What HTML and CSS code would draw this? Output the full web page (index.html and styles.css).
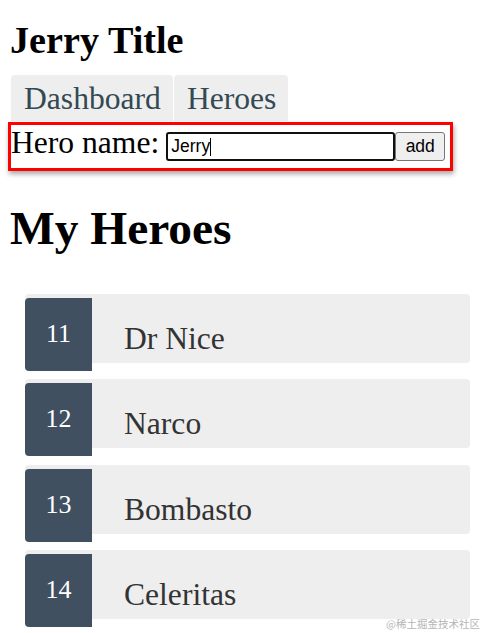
FILE: index.html
```html
<!DOCTYPE html>
<html lang="en">
<head>
<meta charset="utf-8">
<title>Jerry Title</title>
<link rel="stylesheet" href="styles.css">
</head>
<body>
<div class="page">
  <h1 class="title">Jerry Title</h1>
  <nav class="nav">
    <a class="nav-link" href="#">Dashboard</a>
    <a class="nav-link" href="#">Heroes</a>
  </nav>
  <div class="hero-form">
    <label class="hero-label" for="hero-name">Hero name:</label>
    <div class="field">
      <input class="hero-input" id="hero-name" type="text" value="Jerry">
      <span class="caret"></span>
    </div>
    <button class="add-btn" type="button">add</button>
  </div>
  <h2 class="section-title">My Heroes</h2>
  <ul class="heroes">
    <li class="hero"><span class="badge">11</span><span class="hero-name">Dr Nice</span></li>
    <li class="hero"><span class="badge">12</span><span class="hero-name">Narco</span></li>
    <li class="hero"><span class="badge">13</span><span class="hero-name">Bombasto</span></li>
    <li class="hero"><span class="badge">14</span><span class="hero-name">Celeritas</span></li>
  </ul>
</div>
<div class="watermark">@稀土掘金技术社区</div>
</body>
</html>
```
FILE: styles.css
```css
html, body {
  margin: 0;
  padding: 0;
  background: #fff;
}
body {
  font-family: "Liberation Serif", "Times New Roman", serif;
  color: #000;
  height: 633px;
  overflow: hidden;
  position: relative;
}
.page {
  padding: 19px 8px 0 8px;
}
.title {
  margin: 0;
  padding-left: 2px;
  font-size: 38.2px;
  line-height: 43px;
  font-weight: bold;
}
.nav {
  display: flex;
  gap: 1px;
  margin-top: 13px;
  padding-left: 3px;
}
.nav-link {
  display: block;
  background: #eee;
  color: #334953;
  text-decoration: none;
  font-size: 31.6px;
  line-height: 36px;
  padding: 6px 12px 4px 13px;
  border-radius: 4px 4px 0 0;
}
.hero-form {
  position: relative;
  display: flex;
  align-items: flex-start;
  box-sizing: border-box;
  width: 445px;
  height: 49px;
  margin-top: 1px;
  border: 3px solid #ff0000;
  box-shadow: 1px 3px 5px rgba(0, 0, 0, 0.35);
}
.hero-label {
  font-size: 31.6px;
  line-height: 31px;
  margin-top: 2px;
  margin-right: 7px;
}
.field {
  position: relative;
  margin-top: 7px;
}
.hero-input {
  display: block;
  box-sizing: border-box;
  width: 229px;
  height: 29px;
  margin: 0;
  padding: 0 3px;
  border: 2px solid #101010;
  border-radius: 3px;
  font-family: "Liberation Sans", Arial, sans-serif;
  font-size: 17.5px;
  color: #000;
  outline: none;
  background: #fff;
}
.caret {
  position: absolute;
  left: 44px;
  top: 6px;
  width: 1px;
  height: 18px;
  background: #000;
}
.add-btn {
  box-sizing: border-box;
  width: 50px;
  height: 29px;
  margin: 7px 0 0 0;
  padding: 0;
  border: 1px solid #767676;
  border-radius: 3px;
  background: #efefef;
  font-family: "Liberation Sans", Arial, sans-serif;
  font-size: 17.5px;
  color: #000;
}
.section-title {
  margin: 30px 0 0 0;
  padding-left: 2px;
  font-size: 47.4px;
  line-height: 54px;
  font-weight: bold;
}
.heroes {
  list-style: none;
  margin: 39px 0 0 0;
  padding: 0 0 0 17px;
}
.hero {
  display: flex;
  align-items: flex-start;
  width: 445px;
  height: 69px;
  margin-bottom: 16.33px;
  background: #eee;
  border-radius: 4px;
}
.badge {
  box-sizing: border-box;
  flex: 0 0 67px;
  height: 73px;
  margin-top: 4px;
  padding-top: 23px;
  background: #405061;
  color: #fff;
  border-radius: 4px 0 0 4px;
  text-align: center;
  font-size: 26px;
  line-height: 26px;
}
.hero-name {
  margin: 29px 0 0 32px;
  font-size: 31.6px;
  line-height: 31px;
  color: #333;
}
.watermark {
  position: absolute;
  right: 4px;
  bottom: 3px;
  font-family: "Noto Sans CJK SC", sans-serif;
  font-size: 10.5px;
  line-height: 12px;
  color: #b5b5b5;
}
```
